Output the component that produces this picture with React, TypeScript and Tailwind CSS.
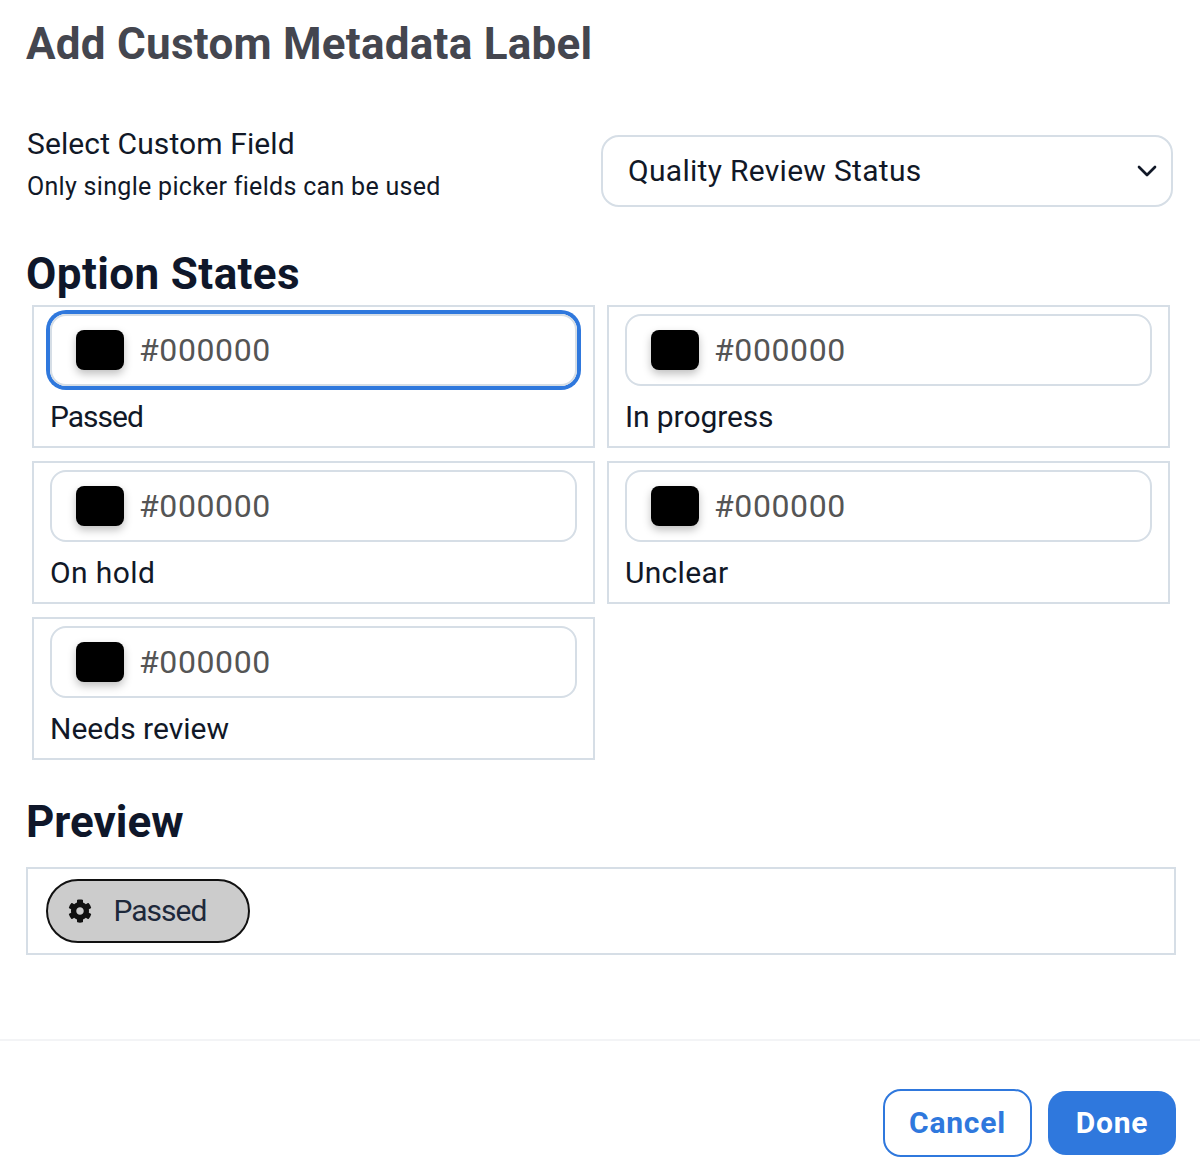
import React from "react";
import { ChevronDown } from "lucide-react";
import { FaCog } from "react-icons/fa";

function Cell({ label, track, focused }: { label: string; track: string; focused?: boolean }) {
  return (
    <div className="h-[143px] border-2 border-[#d6dee6] pl-4 pr-4 pt-[7px]">
      <div
        className={
          focused
            ? "flex h-[72px] items-center gap-[15px] rounded-[16px] border-2 border-[#d6dee6] pl-6 ring-4 ring-[#2f78dd]"
            : "flex h-[72px] items-center gap-[15px] rounded-[16px] border-2 border-[#d6dee6] pl-6"
        }
      >
        <div className="h-10 w-12 rounded-lg bg-black shadow-[0_4px_8px_rgba(0,0,0,0.25)]" />
        <span className="text-[32px] leading-10 tracking-[0.6px] text-[#555555]">#000000</span>
      </div>
      <div className={"mt-[11px] text-[30px] leading-10 text-[#111827] " + track}>{label}</div>
    </div>
  );
}

export default function App() {
  return (
    <div className="relative h-[1176px] w-[1200px] overflow-hidden bg-white font-['Roboto',sans-serif]">
      <div className="pl-[26px] pr-6">
        <h1 className="pt-[19px] text-[44px] leading-[50px] font-bold tracking-[0.25px] text-[#44464f]">Add Custom Metadata Label</h1>

        <div className="mt-[66px] flex items-start justify-between pr-[3px] pl-px">
          <div>
            <div className="text-[30px] leading-[18px] tracking-[0.1px] text-[#111827]">Select Custom Field</div>
            <div className="mt-[25px] text-[25px] leading-[18px] tracking-[0.3px] text-[#111827]">Only single picker fields can be used</div>
          </div>
          <div className="flex h-[72px] w-[572px] items-center justify-between rounded-[18px] border-2 border-[#d6dee6] pr-2 pl-[25px]">
            <span className="text-[30px] leading-10 tracking-[0.3px] text-[#111827]">Quality Review Status</span>
            <ChevronDown className="size-8 text-[#111827]" strokeWidth={2} />
          </div>
        </div>

        <h2 className="mt-[43px] text-[44px] leading-[48px] font-bold tracking-[0.4px] text-[#0f172a]">Option States</h2>

        <div className="mt-[7px] ml-1.5 mr-[6px] grid grid-cols-2 gap-x-3 gap-y-[13px]">
          <Cell label="Passed" track="tracking-[-1px]" focused />
          <Cell label="In progress" track="tracking-[-0.1px]" />
          <Cell label="On hold" track="tracking-[0.4px]" />
          <Cell label="Unclear" track="tracking-[0.3px]" />
          <Cell label="Needs review" track="tracking-normal" />
        </div>

        <h2 className="mt-[38px] text-[44px] leading-[48px] font-bold text-[#0f172a]">Preview</h2>

        <div className="mt-[21px] flex h-[88px] items-start border-2 border-[#d6dee6] pt-[10px] pl-[18px]">
          <div className="flex h-16 w-[204px] items-center gap-[22px] rounded-full border-[2.5px] border-[#111111] bg-[#cccccc] pl-[19.5px]">
            <FaCog className="size-6 text-[#111111]" />
            <span className="text-[30px] leading-10 tracking-[-1px] text-[#1e293b]">Passed</span>
          </div>
        </div>
      </div>

      <div className="mt-[84px] h-0.5 bg-[#f3f4f6]" />

      <div className="mt-12 flex items-center justify-end gap-4 pr-6">
        <button className="h-[68px] w-[149px] rounded-[18px] border-2 border-[#2f78dd] pb-0.5 text-[30px] font-bold tracking-[0.8px] text-[#2f78dd]">Cancel</button>
        <button className="h-16 w-32 rounded-[18px] bg-[#2f78dd] pb-0.5 text-[30px] font-bold tracking-[0.8px] text-white">Done</button>
      </div>
    </div>
  );
}
